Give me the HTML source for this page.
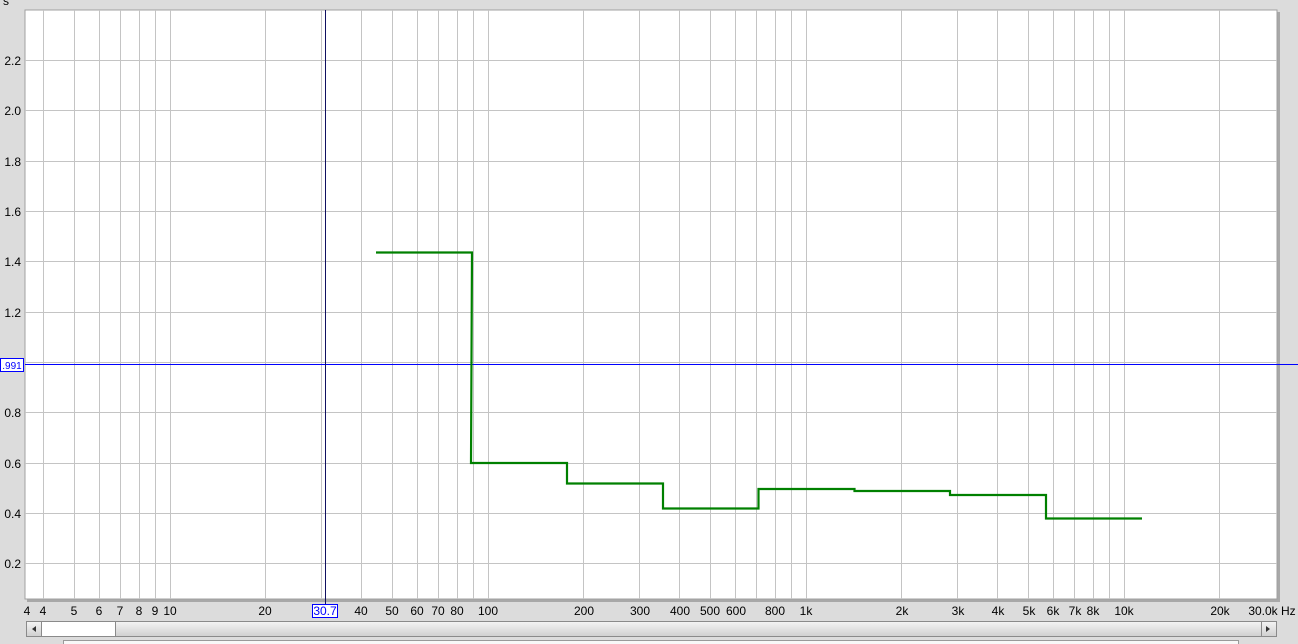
<!DOCTYPE html>
<html><head><meta charset="utf-8"><style>
html,body{margin:0;padding:0;background:#dcdcdc;width:1298px;height:644px;overflow:hidden}
svg{display:block;font-family:"Liberation Sans",sans-serif}
</style></head><body>
<svg width="1298" height="644" xmlns="http://www.w3.org/2000/svg">
<rect x="0" y="0" width="1298" height="644" fill="#dcdcdc"/>
<rect x="27" y="12" width="1253" height="590" fill="#a8a8a8"/>
<rect x="25" y="10" width="1252" height="589" fill="#ffffff" stroke="#a0a0a0" stroke-width="1"/>
<g stroke="#c4c4c4" stroke-width="1">
<path d="M43.5 10V599M74.5 10V599M99.5 10V599M120.5 10V599M139.5 10V599M155.5 10V599M170.5 10V599M265.5 10V599M321.5 10V599M361.5 10V599M392.5 10V599M417.5 10V599M438.5 10V599M457.5 10V599M473.5 10V599M488.5 10V599M583.5 10V599M639.5 10V599M679.5 10V599M710.5 10V599M735.5 10V599M756.5 10V599M775.5 10V599M791.5 10V599M806.5 10V599M901.5 10V599M957.5 10V599M997.5 10V599M1028.5 10V599M1053.5 10V599M1074.5 10V599M1093.5 10V599M1109.5 10V599M1124.5 10V599M1219.5 10V599"/>
<path d="M25 60.5H1277M25 110.5H1277M25 161.5H1277M25 211.5H1277M25 261.5H1277M25 312.5H1277M25 362.5H1277M25 412.5H1277M25 463.5H1277M25 513.5H1277M25 563.5H1277"/>
</g>
<line x1="25" y1="364.5" x2="1298" y2="364.5" stroke="#0000ff" stroke-width="1"/>
<line x1="325.5" y1="10" x2="325.5" y2="604" stroke="#101060" stroke-width="1"/>
<path d="M376 252.5H472L471 463H567V483.5H663V508.5H758.5V489H854.5V491H950V495H1046V518.5H1142" fill="none" stroke="#008000" stroke-width="2.2"/>
<g font-size="12" fill="#000" text-anchor="end">
<text x="6" y="5" text-anchor="middle">s</text>
<text x="21" y="65">2.2</text><text x="21" y="115">2.0</text><text x="21" y="166">1.8</text>
<text x="21" y="216">1.6</text><text x="21" y="266">1.4</text><text x="21" y="317">1.2</text>
<text x="21" y="417">0.8</text><text x="21" y="468">0.6</text><text x="21" y="518">0.4</text><text x="21" y="568">0.2</text>
</g>
<rect x="0.5" y="358.5" width="23" height="13" fill="#fff" stroke="#0000ff"/>
<text x="12" y="369" font-size="10" fill="#0000ff" text-anchor="middle">.991</text>
<g font-size="12" fill="#000" text-anchor="middle">
<text x="27" y="615">4</text><text x="43" y="615">4</text><text x="74" y="615">5</text><text x="99" y="615">6</text>
<text x="120" y="615">7</text><text x="139" y="615">8</text><text x="155" y="615">9</text><text x="170" y="615">10</text>
<text x="265" y="615">20</text><text x="361" y="615">40</text><text x="392" y="615">50</text><text x="417" y="615">60</text>
<text x="438" y="615">70</text><text x="457" y="615">80</text><text x="488" y="615">100</text><text x="584" y="615">200</text>
<text x="640" y="615">300</text><text x="680" y="615">400</text><text x="710" y="615">500</text><text x="736" y="615">600</text>
<text x="775" y="615">800</text><text x="806" y="615">1k</text><text x="902" y="615">2k</text><text x="958" y="615">3k</text>
<text x="998" y="615">4k</text><text x="1029" y="615">5k</text><text x="1053" y="615">6k</text><text x="1075" y="615">7k</text>
<text x="1093" y="615">8k</text><text x="1124" y="615">10k</text><text x="1220" y="615">20k</text>
<text x="1272" y="615">30.0k Hz</text>
</g>
<rect x="312.5" y="604.5" width="25" height="13" fill="#fff" stroke="#0000ff"/>
<text x="325" y="615" font-size="12" fill="#0000ff" text-anchor="middle">30.7</text>
<defs><linearGradient id="g" x1="0" y1="0" x2="0" y2="1"><stop offset="0" stop-color="#f4f4f4"/><stop offset="1" stop-color="#cfcfcf"/></linearGradient></defs>
<rect x="26.5" y="621.5" width="1250" height="15" fill="url(#g)" stroke="#8a8a8a"/>
<rect x="41.5" y="621.5" width="74" height="15" fill="#fff" stroke="#8a8a8a"/>
<line x1="41.5" y1="622" x2="41.5" y2="636" stroke="#8a8a8a"/>
<line x1="1261.5" y1="622" x2="1261.5" y2="636" stroke="#8a8a8a"/>
<path d="M32 629L36 626V632Z" fill="#333"/>
<path d="M1270 629L1266 626V632Z" fill="#333"/>
<rect x="63.5" y="640.5" width="1175" height="8" fill="#f8f8f8" stroke="#9a9a9a"/>
</svg>
</body></html>
